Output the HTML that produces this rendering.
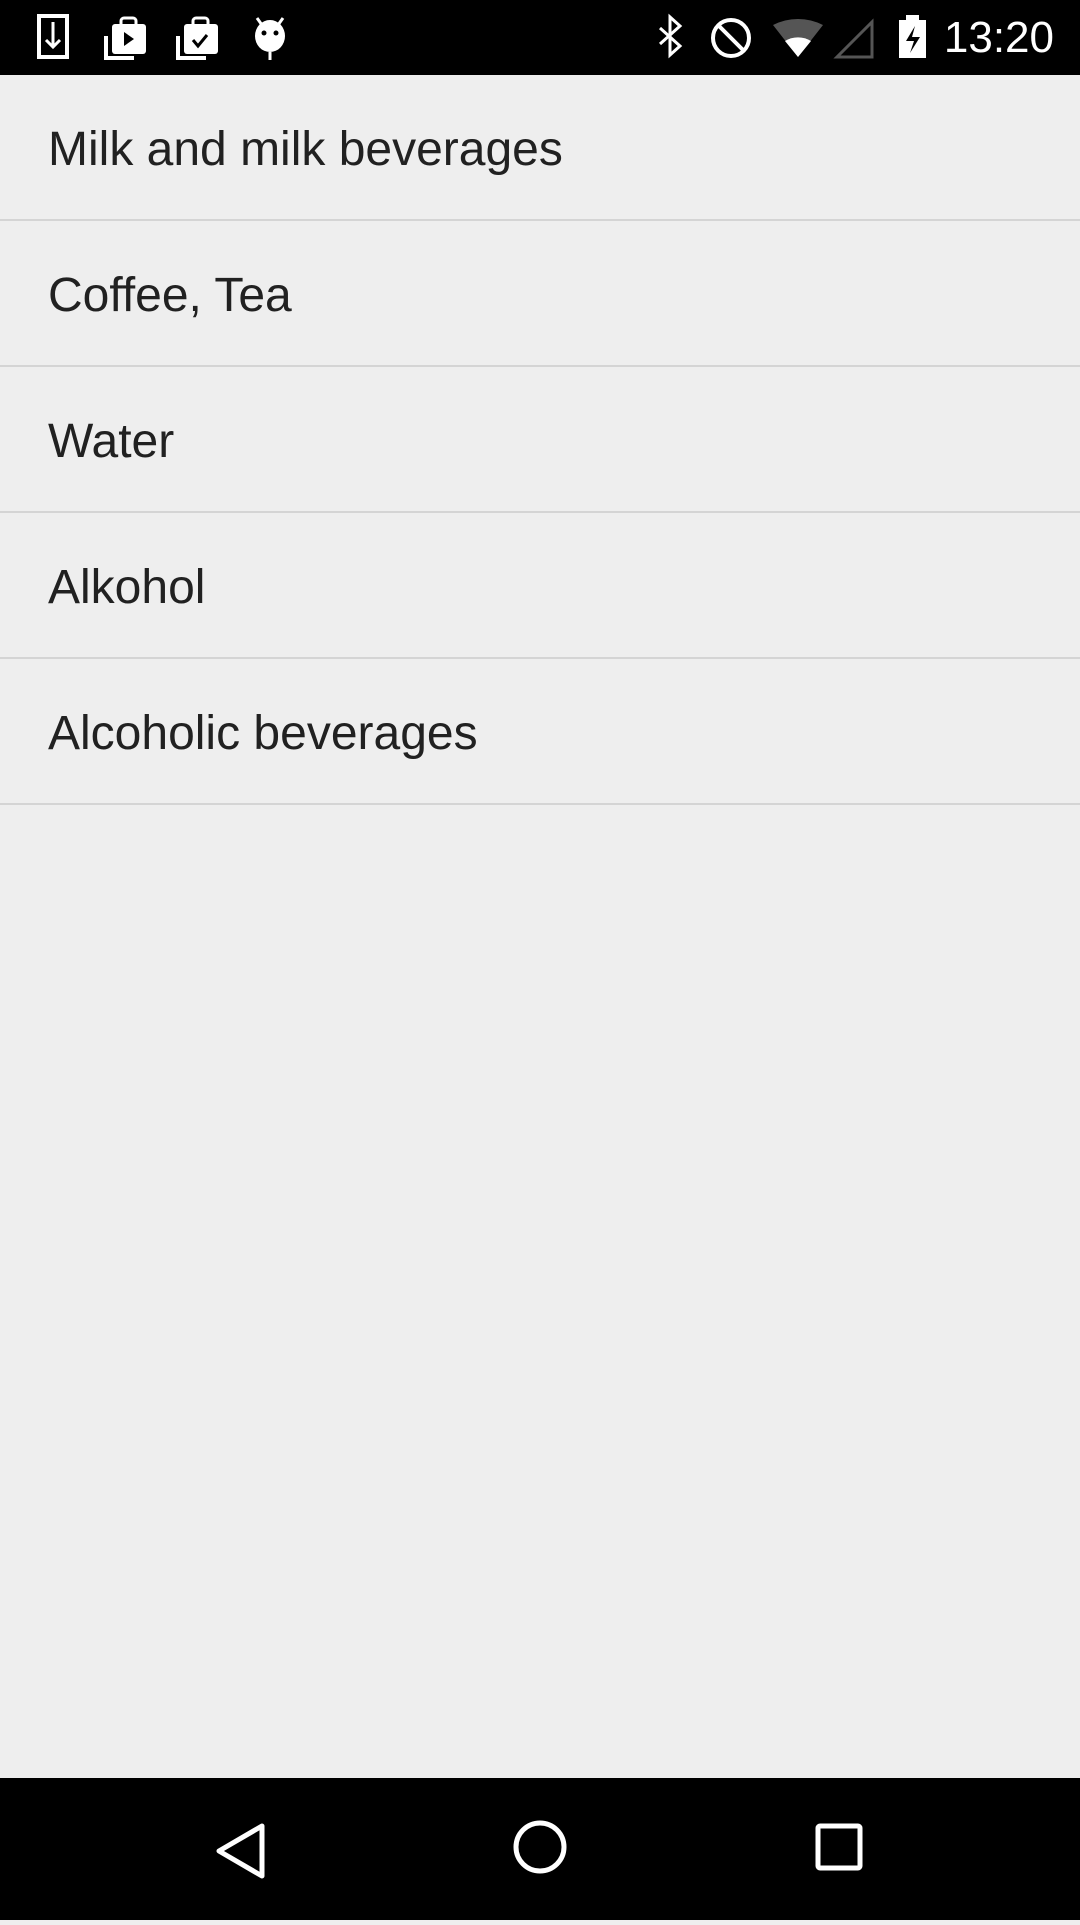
<!DOCTYPE html>
<html><head><meta charset="utf-8"><style>
*{margin:0;padding:0;box-sizing:border-box}
body{width:1080px;height:1920px;background:#eeeeee;position:relative;overflow:hidden;font-family:"Liberation Sans",sans-serif}
.sb{position:absolute;left:0;top:0;width:1080px;height:75px;background:#000}
.nav{position:absolute;left:0;top:1778px;width:1080px;height:142px;background:#000}
.row{position:absolute;left:0;width:1080px;height:146px;border-bottom:2px solid #d4d4d4}
.row span{position:absolute;left:48px;top:48px;font-size:48px;color:#212121;white-space:nowrap;line-height:54px}
.time{position:absolute;right:26px;top:14px;color:#fff;font-size:44px;line-height:48px}
</style></head><body>
<div class="sb">
<svg width="1080" height="75" style="position:absolute;left:0;top:0">
 <g fill="none" stroke="#fff" stroke-width="4">
  <rect x="39" y="16" width="28" height="41"/>
 </g>
 <path d="M53 22v24M46 40l7 7 7-7" stroke="#fff" stroke-width="3" fill="none"/>
 <rect x="112" y="24" width="34" height="30" rx="3" fill="#fff"/>
 <rect x="121" y="18" width="15" height="10" rx="3" fill="none" stroke="#fff" stroke-width="3"/>
 <path d="M106 36v22h28" stroke="#fff" stroke-width="4" fill="none"/>
 <path d="M124 32l10 7-10 7z" fill="#000"/>
 <rect x="184" y="24" width="34" height="30" rx="3" fill="#fff"/>
 <rect x="193" y="18" width="15" height="10" rx="3" fill="none" stroke="#fff" stroke-width="3"/>
 <path d="M178 36v22h28" stroke="#fff" stroke-width="4" fill="none"/>
 <path d="M193 40l5 6 9-11" stroke="#000" stroke-width="3" fill="none"/>
 <ellipse cx="270" cy="36" rx="15" ry="16" fill="#fff"/>
 <path d="M257 18l5 7M283 18l-5 7M270 52v8" stroke="#fff" stroke-width="3"/>
 <circle cx="264" cy="33" r="2.5" fill="#000"/><circle cx="276" cy="33" r="2.5" fill="#000"/>
 <path d="M660 28l20 18-10 9V17l10 9-20 18" stroke="#fff" stroke-width="3" fill="none"/>
 <circle cx="731" cy="38" r="18" stroke="#fff" stroke-width="4" fill="none"/>
 <path d="M719 26l24 24" stroke="#fff" stroke-width="4"/>
 <path d="M773 25a55 55 0 0 1 50 0l-25 32z" fill="#555"/>
 <path d="M785 41a25 25 0 0 1 26 0l-13 16z" fill="#fff"/>
 <path d="M872 22v35h-35z" stroke="#555" stroke-width="3" fill="none"/>
 <rect x="899" y="20" width="27" height="38" fill="#fff"/>
 <rect x="906" y="15" width="13" height="6" fill="#fff"/>
 <path d="M915 26l-9 15h8l-4 12 10-16h-8z" fill="#000"/>
</svg>
<div class="time">13:20</div>
</div>
<div class="row" style="top:75px;height:146px"><span>Milk and milk beverages</span></div>
<div class="row" style="top:221px"><span>Coffee, Tea</span></div>
<div class="row" style="top:367px"><span>Water</span></div>
<div class="row" style="top:513px"><span>Alkohol</span></div>
<div class="row" style="top:659px"><span>Alcoholic beverages</span></div>
<div class="nav">
<svg width="1080" height="142">
 <path d="M262 48v50l-43-25z" stroke="#fff" stroke-width="5" fill="none" stroke-linejoin="round"/>
 <circle cx="540" cy="69" r="24" stroke="#fff" stroke-width="5" fill="none"/>
 <rect x="818" y="48" width="42" height="42" rx="2" stroke="#fff" stroke-width="5" fill="none"/>
</svg>
</div>
</body></html>
